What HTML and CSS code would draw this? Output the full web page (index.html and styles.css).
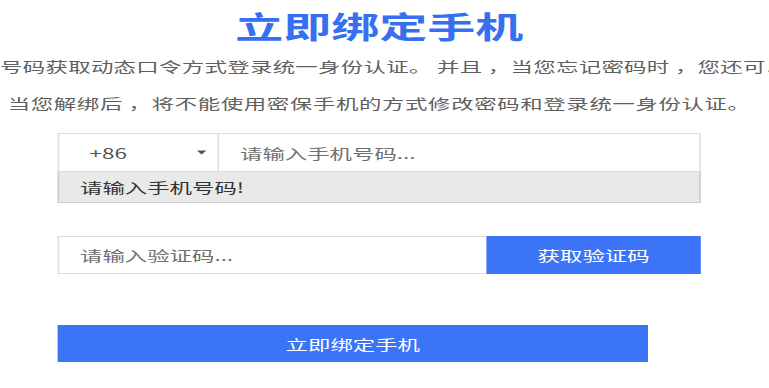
FILE: index.html
```html
<!DOCTYPE html>
<html lang="zh-CN">
<head>
<meta charset="utf-8">
<title>立即绑定手机</title>
<link rel="stylesheet" href="styles.css">
</head>
<body>
<div class="page">
  <h1 class="title">立即绑定手机</h1>
  <div class="intro">
    <p class="intro-line intro-first">号码获取动态口令方式登录统一身份认证。 并且 ，当您忘记密码时 ，您还可以</p>
    <p class="intro-line intro-center">当您解绑后 ，将不能使用密保手机的方式修改密码和登录统一身份认证。</p>
  </div>
  <form class="form">
    <div class="phone-group">
      <div class="phone-row">
        <div class="country">
          <span>+86</span>
          <svg class="caret" width="6" height="5" viewBox="0 0 6 5"><path d="M0 0.5 L6 0.5 L3 4.5 Z" fill="#555"/></svg>
        </div>
        <input class="phone-input" type="text" placeholder="请输入手机号码...">
      </div>
      <div class="error">请输入手机号码!</div>
    </div>
    <div class="code-row">
      <input class="code-input" type="text" placeholder="请输入验证码...">
      <button type="button" class="code-btn">获取验证码</button>
    </div>
    <button type="button" class="submit">立即绑定手机</button>
  </form>
</div>
</body>
</html>
```
FILE: styles.css
```css
html, body {
  margin: 0;
  padding: 0;
  overflow: hidden;
  background: #fff;
}

body {
  font-family: "Noto Sans CJK SC", "Microsoft YaHei", sans-serif;
}

.page {
  width: 474px;
  box-sizing: border-box;
  padding-top: 10px;
  transform: scaleX(1.6);
  transform-origin: 0 0;
}

.title {
  margin: 0;
  font-size: 30px;
  line-height: 30px;
  font-weight: 700;
  text-align: center;
  color: #3670f0;
}

.intro {
  margin-top: 8px;
  font-size: 14px;
  line-height: 37px;
  letter-spacing: 0.4px;
  color: #5f5f5f;
}

.intro-line {
  margin: 0;
  white-space: nowrap;
}

.intro-first {
  letter-spacing: 0.2px;
}

.intro-center {
  text-align: center;
}

.form {
  width: 402px;
  margin: 11px auto 0;
}

.phone-row {
  display: flex;
  height: 39px;
  box-sizing: border-box;
  border: 1px solid #ddd;
}

.country {
  width: 100px;
  flex: none;
  box-sizing: border-box;
  border-right: 1px solid #ddd;
  display: flex;
  align-items: center;
  justify-content: space-between;
  padding: 0 7px 0 19px;
  font-size: 14px;
  color: #555;
}

.caret {
  display: block;
}

.phone-input,
.code-input {
  flex: 1;
  min-width: 0;
  border: 0;
  outline: none;
  padding: 0 0 0 13px;
  font-family: "Noto Sans CJK SC", "Microsoft YaHei", sans-serif;
  font-size: 14px;
  color: #333;
  background: #fff;
}

.phone-input::placeholder,
.code-input::placeholder {
  color: #707070;
}

.error {
  height: 31px;
  box-sizing: border-box;
  border: 1px solid #ccc;
  border-top: 0;
  background: #e9e9e9;
  padding-left: 13px;
  display: flex;
  align-items: center;
  font-size: 14px;
  color: #333;
}

.code-row {
  display: flex;
  height: 38px;
  margin-top: 33px;
}

.code-input {
  border: 1px solid #ddd;
  border-right: 0;
  padding-left: 13px;
}

.code-btn {
  width: 134px;
  flex: none;
  border: 0;
  margin: 0;
  background: #3b74f6;
  color: #fff;
  font-family: "Noto Sans CJK SC", "Microsoft YaHei", sans-serif;
  font-size: 14px;
}

.submit {
  display: block;
  width: 369px;
  height: 37px;
  margin-top: 51px;
  border: 0;
  padding: 0;
  background: #3b74f6;
  color: #fff;
  font-family: "Noto Sans CJK SC", "Microsoft YaHei", sans-serif;
  font-size: 14px;
}
```
